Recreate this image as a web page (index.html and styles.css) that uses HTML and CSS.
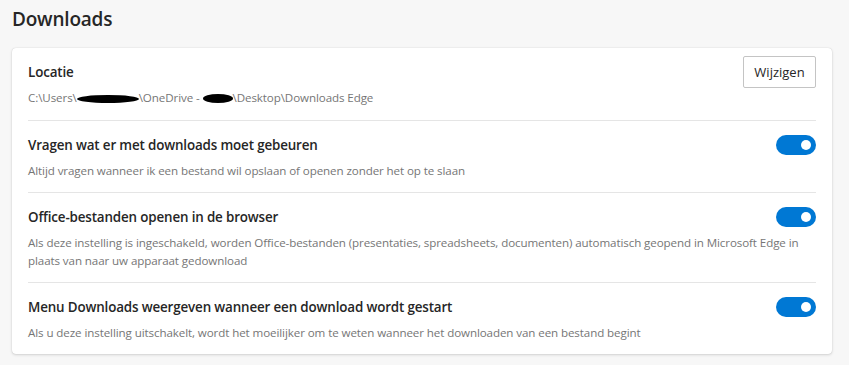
FILE: index.html
```html
<!DOCTYPE html>
<html lang="nl">
<head>
<meta charset="utf-8">
<title>Downloads</title>
<link rel="stylesheet" href="styles.css">
</head>
<body>
<main class="page">
  <h1 class="page-title">Downloads</h1>
  <section class="card">
    <div class="row row-location">
      <div class="text">
        <div class="label">Locatie</div>
        <div class="desc path">C:\Users\<span class="blob blob-a"></span>\OneDrive - <span class="blob blob-b"></span>\Desktop\Downloads Edge</div>
      </div>
      <button class="btn">Wijzigen</button>
    </div>
    <div class="row">
      <div class="head">
        <div class="label">Vragen wat er met downloads moet gebeuren</div>
        <span class="toggle"><span class="knob"></span></span>
      </div>
      <div class="desc">Altijd vragen wanneer ik een bestand wil opslaan of openen zonder het op te slaan</div>
    </div>
    <div class="row">
      <div class="head">
        <div class="label">Office-bestanden openen in de browser</div>
        <span class="toggle"><span class="knob"></span></span>
      </div>
      <div class="desc">Als deze instelling is ingeschakeld, worden Office-bestanden (presentaties, spreadsheets, documenten) automatisch geopend in Microsoft Edge in plaats van naar uw apparaat gedownload</div>
    </div>
    <div class="row">
      <div class="head">
        <div class="label">Menu Downloads weergeven wanneer een download wordt gestart</div>
        <span class="toggle"><span class="knob"></span></span>
      </div>
      <div class="desc">Als u deze instelling uitschakelt, wordt het moeilijker om te weten wanneer het downloaden van een bestand begint</div>
    </div>
  </section>
</main>
</body>
</html>
```
FILE: styles.css
```css
* { box-sizing: border-box; }
html, body { margin: 0; padding: 0; }
body {
  background: #f7f7f7;
  font-family: "Segoe UI", "Open Sans", "Noto Sans", sans-serif;
  color: #262626;
  width: 849px;
  height: 365px;
  overflow: hidden;
}
.page { padding: 4px 17px 0 12px; }
.page-title {
  margin: 0 0 14px 0;
  font-size: 19px;
  font-weight: 600;
  line-height: 30px;
  letter-spacing: -0.2px;
}
.card {
  background: #fff;
  border-radius: 4px;
  box-shadow: 0 0 1px rgba(0,0,0,0.2), 0 1px 3px rgba(0,0,0,0.14);
  padding: 0 16px;
}
.row {
  border-top: 1px solid #e5e5e5;
  padding: 14px 0 12px 0;
  min-height: 72px;
}
.row-location {
  border-top: none;
  padding: 0;
  height: 72px;
  display: flex;
  justify-content: space-between;
  align-items: flex-start;
}
.row-location .text { padding-top: 14px; }
.head {
  display: flex;
  justify-content: space-between;
  align-items: flex-start;
}
.label {
  font-size: 13.4px;
  font-weight: 600;
  line-height: 20px;
  letter-spacing: -0.15px;
}
.desc {
  font-size: 11.6px;
  color: #767676;
  line-height: 18px;
  margin-top: 7px;
  letter-spacing: -0.1px;
}
.path { white-space: nowrap; }
.blob {
  display: inline-block;
  background: #000;
  border-radius: 50%;
  height: 8px;
  vertical-align: -1px;
}
.blob-a { width: 62px; }
.blob-b { width: 30px; height: 9px; }
.btn {
  margin-top: 8px;
  width: 73px;
  height: 32px;
  background: #fff;
  border: 1px solid #c4c4c4;
  border-radius: 2px;
  font-family: inherit;
  font-size: 13px;
  color: #262626;
  padding: 0;
}
.toggle {
  flex: none;
  width: 40px;
  height: 20px;
  border-radius: 10px;
  background: #0078d4;
  position: relative;
}
.knob {
  position: absolute;
  right: 5px;
  top: 5px;
  width: 10px;
  height: 10px;
  border-radius: 50%;
  background: #fff;
}
```
